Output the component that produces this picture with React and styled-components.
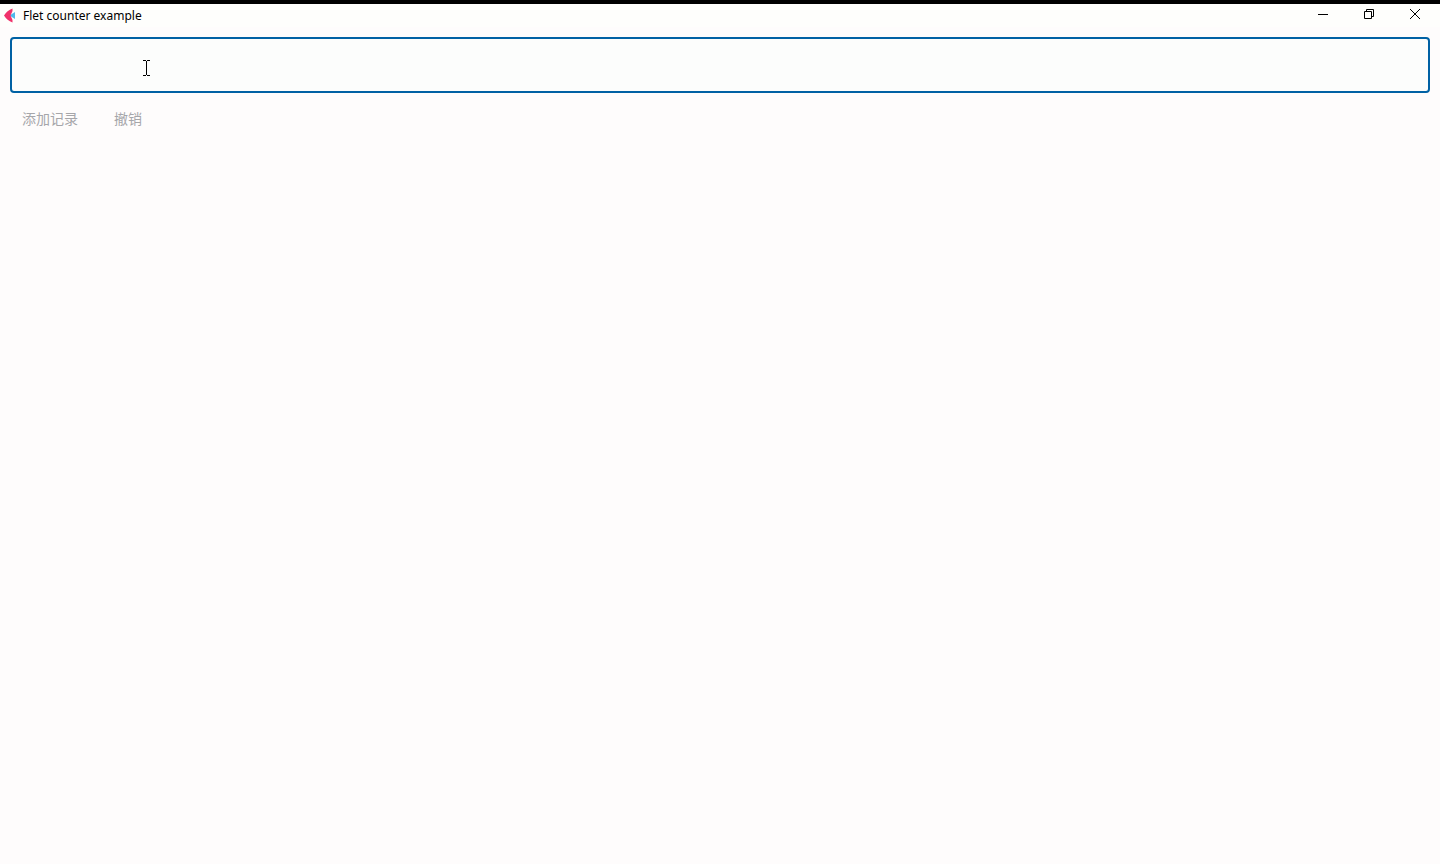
import React, { useState } from "react";
import styled, { createGlobalStyle } from "styled-components";

const GlobalStyle = createGlobalStyle`
  * { box-sizing: border-box; }
  body {
    margin: 0;
    background: #fefcfc;
    font-family: "Noto Sans", "Noto Sans CJK SC", sans-serif;
  }
`;

const Window = styled.div`
  display: flex;
  flex-direction: column;
  min-height: 100vh;
  border-top: 4px solid #000;
`;

const TitleBar = styled.header`
  display: flex;
  align-items: center;
  height: 23px;
  padding: 0 2px 0 4px;
  background: #fefefc;
`;

const Title = styled.h1`
  flex: 1;
  margin: 0 0 0 7px;
  color: #000;
  font-size: 12px;
  font-weight: 400;
  line-height: 23px;
`;

const WindowControls = styled.div`
  display: flex;
  align-self: flex-start;
`;

const WindowButton = styled.button`
  display: flex;
  align-items: center;
  justify-content: center;
  width: 46px;
  height: 20px;
  padding: 0;
  border: 0;
  background: transparent;
  color: #000;

  &:hover { background: #e9e9e8; }
`;

const Content = styled.main`
  flex: 1;
  padding: 10px;
`;

const Field = styled.div`
  position: relative;
`;

const TextBox = styled.input`
  display: block;
  width: 100%;
  height: 56px;
  padding: 0 12px;
  border: 2px solid #0061a4;
  border-radius: 4px;
  outline: 0;
  background: #fcfdfc;
  color: #1a1c1e;
  font: inherit;
  font-size: 16px;
`;

const Pointer = styled.svg`
  position: absolute;
  top: 23px;
  left: 133px;
  pointer-events: none;
`;

const Actions = styled.div`
  display: flex;
  gap: 12px;
  margin-top: 10px;
`;

const TextButton = styled.button`
  height: 30px;
  padding: 0 12px;
  border: 0;
  border-radius: 16px;
  background: transparent;
  color: #1a1c1e;
  font-family: "Noto Sans CJK SC", sans-serif;
  font-size: 14px;
  line-height: 20px;

  &:disabled { color: #a6a6aa; }
`;

function Logo() {
  return (
    <svg width="12" height="16" viewBox="0 0 12 16" aria-hidden="true">
      <path d="M5.5 7.5 11 4V11Z" fill="#4fb9ec" />
      <path d="M0 7.5Q3 2.5 8.5 .5V3L6.5 7.5 8.5 12V14.5Q3 12.5 0 7.5Z" fill="#f0326b" />
    </svg>
  );
}

function ControlIcon({ d }) {
  return (
    <svg width="12" height="12" viewBox="0 0 12 12" fill="none" stroke="currentColor" aria-hidden="true">
      <path d={d} />
    </svg>
  );
}

const controls = [
  { label: "Minimize", d: "M1 6.5H11" },
  { label: "Restore", d: "M1.5 3.5H8.5V10.5H1.5ZM3.5 3.5V1.5H10.5V8.5H8.5" },
  { label: "Close", d: "M1 1 11 11M11 1 1 11" },
];

export default function App() {
  const [text, setText] = useState("");

  return (
    <Window>
      <GlobalStyle />
      <TitleBar>
        <Logo />
        <Title>Flet counter example</Title>
        <WindowControls>
          {controls.map(({ label, d }) => (
            <WindowButton key={label} type="button" aria-label={label}>
              <ControlIcon d={d} />
            </WindowButton>
          ))}
        </WindowControls>
      </TitleBar>
      <Content>
        <Field>
          <TextBox aria-label="记录" value={text} onChange={(e) => setText(e.target.value)} />
          <Pointer width="7" height="16" viewBox="0 0 7 16" fill="none" stroke="#000" aria-hidden="true">
            <path d="M0 .5H3M4 .5H7M3.5 1V15M0 15.5H3M4 15.5H7" />
          </Pointer>
        </Field>
        <Actions>
          <TextButton type="button" disabled={!text}>添加记录</TextButton>
          <TextButton type="button" disabled={!text}>撤销</TextButton>
        </Actions>
      </Content>
    </Window>
  );
}
